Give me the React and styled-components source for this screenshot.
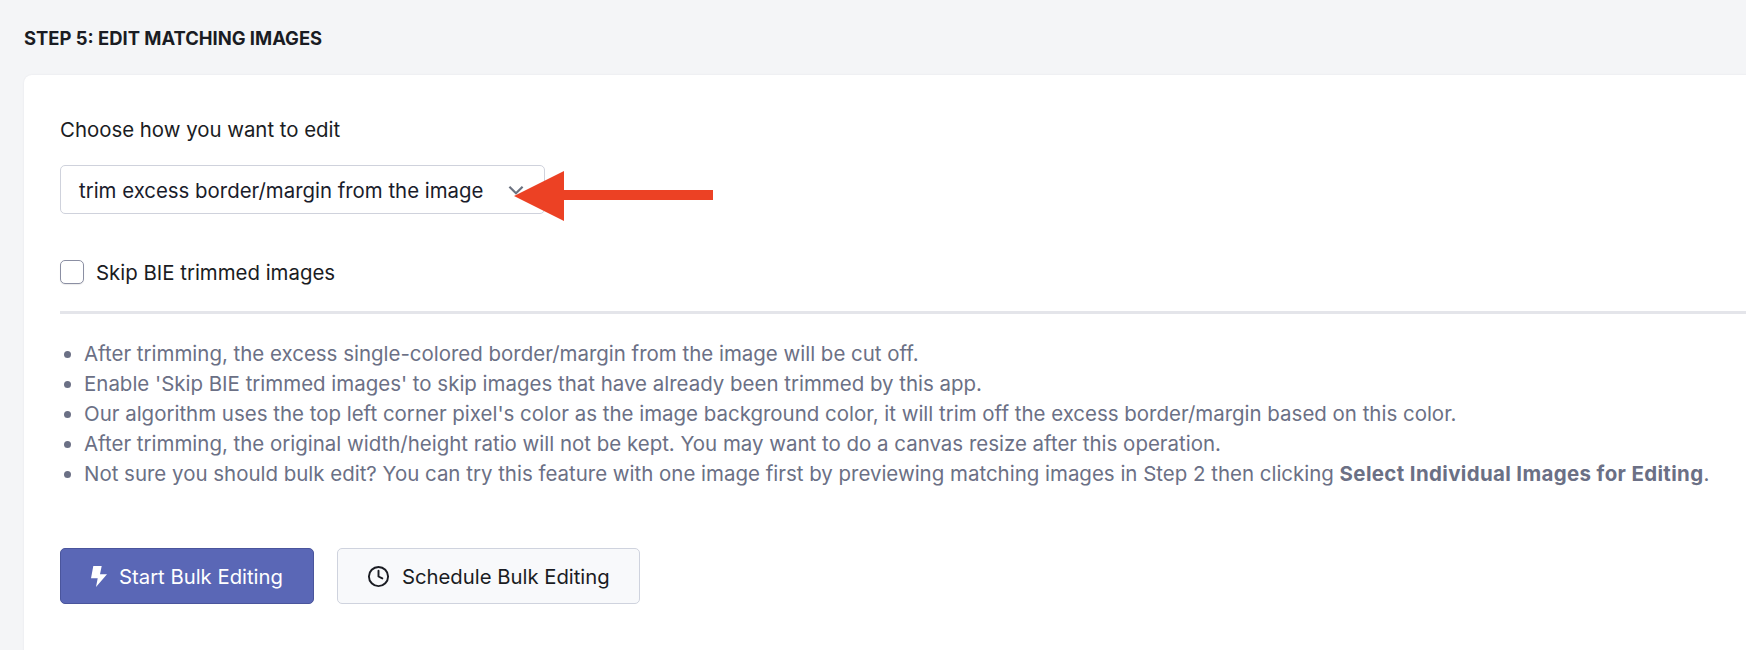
import React from "react";
import styled, { createGlobalStyle } from "styled-components";
import { FiClock } from "react-icons/fi";

const GlobalStyle = createGlobalStyle`
  html, body {
    margin: 0;
    padding: 0;
    height: 650px;
    overflow: hidden;
    background: #f4f5f7;
    font-family: Inter, "Noto Sans", sans-serif;
  }
`;

const notes = [
  "After trimming, the excess single-colored border/margin from the image will be cut off.",
  "Enable 'Skip BIE trimmed images' to skip images that have already been trimmed by this app.",
  "Our algorithm uses the top left corner pixel's color as the image background color, it will trim off the excess border/margin based on this color.",
  "After trimming, the original width/height ratio will not be kept. You may want to do a canvas resize after this operation.",
];

const App = () => {
  return (
    <Page>
      <GlobalStyle />
      <Title>Step 5: Edit Matching Images</Title>
      <Card>
        <Label>Choose how you want to edit</Label>
        <SelectWrap>
          <Select>trim excess border/margin from the image</Select>
          <Chevron viewBox="0 0 20 20" fill="none">
            <path d="M4 7l6 6 6-6" stroke="#6b7280" strokeWidth="2" />
          </Chevron>
          <Arrow viewBox="0 0 200 52">
            <path d="M0 25L50 0V19H199V29H50V50Z" fill="#ec4124" />
          </Arrow>
        </SelectWrap>
        <CheckRow>
          <Check type="checkbox" />
          <CheckText>Skip BIE trimmed images</CheckText>
        </CheckRow>
        <Divider />
        <Notes>
          {notes.map((item, index) => (
            <li key={index}>{item}</li>
          ))}
          <li>
            Not sure you should bulk edit? You can try this feature with one
            image first by previewing matching images in Step 2 then clicking{" "}
            <b>Select Individual Images for Editing</b>.
          </li>
        </Notes>
        <Buttons>
          <Button $primary>
            <svg width="16" height="21" viewBox="0 0 16 21" fill="#fff">
              <path d="M2.3 0H10.7L9 8.3H16L5 21L6.7 12.3H0Z" />
            </svg>
            Start Bulk Editing
          </Button>
          <Button>
            <FiClock size={23} />
            Schedule Bulk Editing
          </Button>
        </Buttons>
      </Card>
    </Page>
  );
};

const Page = styled.div`
  width: 1746px;
  height: 650px;
  overflow: hidden;
  padding: 27px 0 0 24px;
  box-sizing: border-box;
`;

const Title = styled.h2`
  margin: 0 0 26px;
  font-size: 18.4px;
  line-height: 22px;
  font-weight: 700;
  text-transform: uppercase;
  color: #1a1c23;
`;

const Card = styled.section`
  width: 1800px;
  height: 600px;
  box-sizing: border-box;
  padding: 40px 36px;
  background: #fff;
  border-radius: 8px;
  box-shadow: 0 0 2px rgba(30, 40, 60, 0.08);
`;

const Label = styled.div`
  font-size: 20.4px;
  line-height: 30px;
  color: #1a1c23;
  margin-bottom: 20px;
`;

const SelectWrap = styled.div`
  position: relative;
  width: 485px;
`;

const Select = styled.div`
  height: 49px;
  box-sizing: border-box;
  padding: 1px 18px 0;
  display: flex;
  align-items: center;
  border: 1px solid #cfd2dc;
  border-radius: 5px;
  font-size: 20.4px;
  color: #1a1c2b;
`;

const Chevron = styled.svg`
  position: absolute;
  top: 14px;
  right: 18px;
  width: 22px;
  height: 22px;
`;

const Arrow = styled.svg`
  position: absolute;
  top: 6px;
  left: 454px;
  width: 200px;
  height: 52px;
`;

const CheckRow = styled.label`
  display: flex;
  align-items: center;
  gap: 12px;
  height: 30px;
  margin-top: 43px;
  font-size: 20.4px;
  line-height: 30px;
  color: #1a1c23;
`;

const CheckText = styled.span`
  padding-top: 2px;
`;

const Check = styled.input`
  appearance: none;
  margin: 0;
  width: 24px;
  height: 24px;
  background: #fff;
  border: 1px solid #8b8fa3;
  border-radius: 5px;
  box-shadow: 0 1px 1px rgba(0, 0, 0, 0.08);
`;

const Divider = styled.hr`
  margin: 24px 0 0;
  border: 0;
  height: 3px;
  background: #e4e5ea;
`;

const Notes = styled.ul`
  margin: 25px 0 0;
  padding: 0 0 0 24px;
  font-size: 20.47px;
  line-height: 30px;
  color: #6b7085;

  b {
    letter-spacing: 0.36px;
  }
`;

const Buttons = styled.div`
  display: flex;
  gap: 23px;
  margin-top: 59px;
`;

const Button = styled.button`
  height: 56px;
  display: flex;
  align-items: center;
  gap: 12px;
  box-sizing: border-box;
  padding: 0 ${(p) => (p.$primary ? "30px" : "29px")};
  border: 1px solid ${(p) => (p.$primary ? "#4a559c" : "#cfd3de")};
  border-radius: 5px;
  background: ${(p) => (p.$primary ? "#5a67b6" : "#f8f9fb")};
  color: ${(p) => (p.$primary ? "#fff" : "#1a1c23")};
  font-family: inherit;
  font-size: 20.3px;
`;

export default App;
